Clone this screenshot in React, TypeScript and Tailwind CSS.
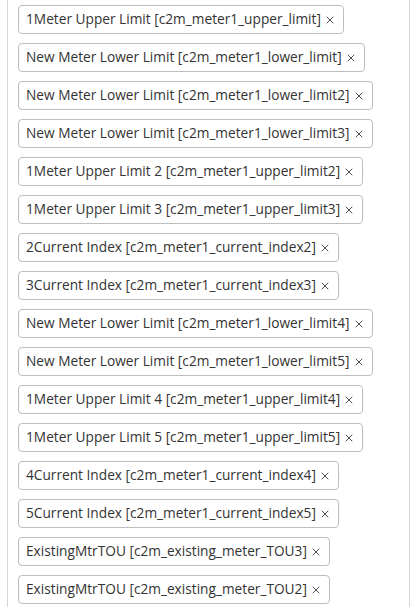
import { X } from "lucide-react";

const CHIPS = [
  "1Meter Upper Limit [c2m_meter1_upper_limit]",
  "New Meter Lower Limit [c2m_meter1_lower_limit]",
  "New Meter Lower Limit [c2m_meter1_lower_limit2]",
  "New Meter Lower Limit [c2m_meter1_lower_limit3]",
  "1Meter Upper Limit 2 [c2m_meter1_upper_limit2]",
  "1Meter Upper Limit 3 [c2m_meter1_upper_limit3]",
  "2Current Index [c2m_meter1_current_index2]",
  "3Current Index [c2m_meter1_current_index3]",
  "New Meter Lower Limit [c2m_meter1_lower_limit4]",
  "New Meter Lower Limit [c2m_meter1_lower_limit5]",
  "1Meter Upper Limit 4 [c2m_meter1_upper_limit4]",
  "1Meter Upper Limit 5 [c2m_meter1_upper_limit5]",
  "4Current Index [c2m_meter1_current_index4]",
  "5Current Index [c2m_meter1_current_index5]",
  "ExistingMtrTOU [c2m_existing_meter_TOU3]",
  "ExistingMtrTOU [c2m_existing_meter_TOU2]",
];

export default function App() {
  return (
    <div className="h-[607px] overflow-hidden bg-white font-['Open_Sans',sans-serif]">
      <div className="ml-[7px] w-[403px] h-full border-x border-[#d6d6d6] pl-[10px] pt-[5px]">
        <div className="flex flex-col items-start gap-[9px]">
          {CHIPS.map((c) => (
            <div
              key={c}
              className="flex h-[29px] items-center gap-[3px] rounded-[4px] border border-[#bdbdbd] pl-[7px] pr-[7px] text-[13.7px] text-[#333333]"
            >
              <span className="whitespace-nowrap">{c}</span>
              <X className="mt-[1px] h-[12px] w-[12px] text-[#333333]" strokeWidth={1.75} />
            </div>
          ))}
        </div>
      </div>
    </div>
  );
}
